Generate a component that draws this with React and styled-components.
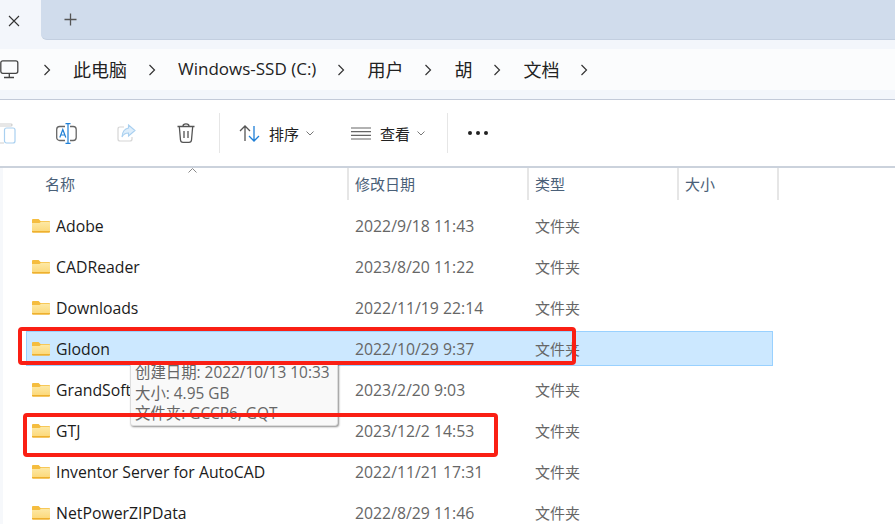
import React from 'react'
import styled, { createGlobalStyle } from 'styled-components'

const rows = [
  { name: 'Adobe', date: '2022/9/18 11:43' },
  { name: 'CADReader', date: '2023/8/20 11:22' },
  { name: 'Downloads', date: '2022/11/19 22:14' },
  { name: 'Glodon', date: '2022/10/29 9:37', selected: true },
  { name: 'GrandSoft', date: '2023/2/20 9:03' },
  { name: 'GTJ', date: '2023/12/2 14:53' },
  { name: 'Inventor Server for AutoCAD', date: '2022/11/21 17:31' },
  { name: 'NetPowerZIPData', date: '2022/8/29 11:46' },
]

const crumbs = [
  { label: '此电脑' },
  { label: 'Windows-SSD (C:)', latin: true },
  { label: '用户' },
  { label: '胡' },
  { label: '文档' },
]

const FolderIcon = () => (
  <svg width="18" height="15" viewBox="0 0 19 15" preserveAspectRatio="none">
    <defs>
      <linearGradient id="folderFace" x1="0" y1="0" x2="0" y2="1">
        <stop offset="0" stopColor="#fde9a6" />
        <stop offset="1" stopColor="#fcd878" />
      </linearGradient>
    </defs>
    <path d="M0 2 Q0 1 1 1 H7 L9 3 H18 Q19 3 19 4 V13.500 Q19 14.500 18 14.500 H1 Q0 14.500 0 13.500 Z" fill="#f5bd3f" />
    <path d="M0 5 H8 L9.500 3.800 H18 Q19 3.800 19 4.800 V13 Q19 14 18 14 H1 Q0 14 0 13 Z" fill="url(#folderFace)" />
    <path d="M0 13 H19 V13.500 Q19 14.500 18 14.500 H1 Q0 14.500 0 13.500 Z" fill="#eeb02e" />
  </svg>
)

const Chevron = () => (
  <svg width="8" height="12" viewBox="0 0 8 12">
    <path d="M1.500 1 L6.500 6 L1.500 11" fill="none" stroke="#333" strokeWidth="1.200" />
  </svg>
)

const Caret = () => (
  <svg width="8" height="5" viewBox="0 0 8 5">
    <path d="M0.500 0.500 L4 4 L7.500 0.500" fill="none" stroke="#777" strokeWidth="1" />
  </svg>
)

const App = () => {
  return (
    <Window>
      <GlobalStyle />
      <TabStrip>
        <Tab>
          <svg width="12" height="12" viewBox="0 0 12 12">
            <path d="M1 1 L11 11 M11 1 L1 11" stroke="#333" strokeWidth="1.100" />
          </svg>
        </Tab>
        <NewTabArea>
          <svg width="13" height="13" viewBox="0 0 13 13">
            <path d="M6.500 0.500 V12.500 M0.500 6.500 H12.500" stroke="#555" strokeWidth="1.300" />
          </svg>
        </NewTabArea>
      </TabStrip>

      <AddressArea>
        <AddressBar>
          <PcIcon width="19" height="20" viewBox="0 0 19 20">
            <rect x="0.800" y="0.800" width="17" height="12.500" rx="2" fill="none" stroke="#444" strokeWidth="1.300" />
            <path d="M9.300 13.500 V17 M4 17.500 H14" stroke="#444" strokeWidth="1.300" fill="none" />
          </PcIcon>
          {crumbs.map(c => (
            <React.Fragment key={c.label}>
              <ChevronBox><Chevron /></ChevronBox>
              <Crumb $latin={c.latin}>{c.label}</Crumb>
            </React.Fragment>
          ))}
          <ChevronBox><Chevron /></ChevronBox>
        </AddressBar>
      </AddressArea>

      <Toolbar>
        <ToolIcon $w={36} $start>
          <svg width="16" height="21" viewBox="0 0 16 21">
            <rect x="4.500" y="5" width="10.500" height="15" rx="2" fill="none" stroke="#a9d0f0" strokeWidth="1.200" />
            <path d="M0 3 H11 Q12 3 12 2 Q12 1 11 1 H0 M0 20 H4" stroke="#cfcfcf" strokeWidth="1.200" fill="none" />
          </svg>
        </ToolIcon>
        <ToolIcon $w={61}>
          <svg width="21" height="21" viewBox="0 0 21 21">
            <rect x="0.700" y="3.500" width="19.500" height="14" rx="3" fill="none" stroke="#666" strokeWidth="1.300" />
            <rect x="9" y="0" width="5" height="21" fill="#fff" />
            <path d="M12 0.500 V20.500 M9.500 0.700 H14.500 M9.500 20.300 H14.500" stroke="#1f7fd6" strokeWidth="1.200" fill="none" />
            <path d="M3.800 14.500 L6.800 6.500 L9.800 14.500 M5 12 H8.600" stroke="#1f7fd6" strokeWidth="1.200" fill="none" />
          </svg>
        </ToolIcon>
        <ToolIcon $w={59}>
          <svg width="19" height="19" viewBox="0 0 19 19">
            <path d="M7 3 H3 Q1 3 1 5 V15 Q1 17 3 17 H13 Q15 17 15 15 V13" fill="none" stroke="#d6d6d6" strokeWidth="1.200" />
            <path d="M11.500 1 L18 6.500 L11.500 12 V9 Q7 9 5 13 Q5.500 5 11.500 4 Z" fill="#deeefb" stroke="#a9d0f0" strokeWidth="1.100" />
          </svg>
        </ToolIcon>
        <ToolIcon $w={59}>
          <svg width="18" height="20" viewBox="0 0 18 20">
            <path d="M0.500 3.500 H17.500 M6 3 Q6 0.800 9 0.800 Q12 0.800 12 3 M2.300 3.500 L3.500 17 Q3.700 19.300 6 19.300 H12 Q14.300 19.300 14.500 17 L15.700 3.500 M7 8 V15 M11 8 V15" fill="none" stroke="#555" strokeWidth="1.300" />
          </svg>
        </ToolIcon>
        <Divider $gap={4} />
        <ToolButton $w={112}>
          <svg width="21" height="17" viewBox="0 0 21 17">
            <path d="M6 16 V1 M1 6 L6 1 L11 6" fill="none" stroke="#555" strokeWidth="1.300" />
            <path d="M15 1 V16 M10 11 L15 16 L20 11" fill="none" stroke="#1f7fd6" strokeWidth="1.300" />
          </svg>
          <ToolLabel>排序</ToolLabel>
          <Caret />
        </ToolButton>
        <ToolButton $w={115}>
          <svg width="20" height="13" viewBox="0 0 20 13">
            <path d="M0 1 H20 M0 4.700 H20 M0 8.300 H20 M0 12 H20" stroke="#666" strokeWidth="1.200" />
          </svg>
          <ToolLabel>查看</ToolLabel>
          <Caret />
        </ToolButton>
        <Divider />
        <More>
          <Dot /><Dot /><Dot />
        </More>
      </Toolbar>

      <ListPane>
        <Gutter />
        <List>
          <HeaderRow>
            <NameHead>
              名称
              <SortMark>
                <svg width="9" height="5" viewBox="0 0 9 5">
                  <path d="M0.500 4.500 L4.500 0.500 L8.500 4.500" fill="none" stroke="#888" strokeWidth="1" />
                </svg>
              </SortMark>
            </NameHead>
            <HeadCell $w={180}>修改日期</HeadCell>
            <HeadCell $w={150}>类型</HeadCell>
            <HeadCell $w={102}>大小</HeadCell>
          </HeaderRow>
          {rows.map(r => (
            <Row key={r.name}>
              <RowBox $selected={r.selected}>
                <NameCell>
                  <FolderIcon />
                  <span>{r.name}</span>
                </NameCell>
                <DateCell>{r.date}</DateCell>
                <TypeCell>文件夹</TypeCell>
              </RowBox>
            </Row>
          ))}
        </List>

        <Tooltip>
          <div>创建日期: 2022/10/13 10:33</div>
          <div>大小: 4.95 GB</div>
          <div>文件夹: GCCP6, GQT</div>
        </Tooltip>
        <RedBox $left={18} $top={159} $width={558} $height={38} />
        <RedBox $left={23} $top={245} $width={475} $height={44} />
      </ListPane>
    </Window>
  )
}

const GlobalStyle = createGlobalStyle`
  html, body {
    margin: 0;
    padding: 0;
    background: #fff;
    overflow: hidden;
  }
  * {
    box-sizing: border-box;
  }
`

const Window = styled.div`
  width: 895px;
  height: 524px;
  overflow: hidden;
  font-family: "Open Sans", "Noto Sans CJK SC", sans-serif;
  color: #1b1b1b;
  background: #fff;
`

const TabStrip = styled.div`
  height: 41px;
  display: flex;
  background: #f3f6fb;
`

const Tab = styled.div`
  width: 41px;
  height: 41px;
  background: #f3f6fb;
  border-top-right-radius: 8px;
  display: flex;
  align-items: center;
  padding-left: 8px;
  flex: none;
`

const NewTabArea = styled.div`
  flex: 1;
  height: 40px;
  display: flex;
  align-items: center;
  padding-left: 23px;
  background: #d0dcec;
  border-bottom: 1px solid #c3cfe0;
  border-bottom-left-radius: 6px;
`

const AddressArea = styled.div`
  height: 59px;
  padding-top: 8px;
  background: #f3f6fb;
  border-bottom: 1px solid #c3cad8;
`

const AddressBar = styled.div`
  height: 41px;
  display: flex;
  align-items: center;
  background: #fbfcfd;
  padding-bottom: 2px;
  font-size: 18px;
`

const PcIcon = styled.svg`
  margin-right: 3px;
  margin-top: 2px;
  flex: none;
`

const ChevronBox = styled.div`
  width: 8px;
  flex: none;
  display: flex;
  margin: 2px 22.500px 0 20.500px;
`

const Crumb = styled.span`
  color: #222;
  white-space: nowrap;
  font-size: ${p => (p.$latin ? '17px' : 'inherit')};
`

const Toolbar = styled.div`
  height: 68px;
  display: flex;
  align-items: center;
  border-bottom: 2px solid #cbd2dc;
  background: #fff;
`

const ToolIcon = styled.div`
  width: ${p => p.$w}px;
  display: flex;
  justify-content: ${p => (p.$start ? 'flex-start' : 'center')};
  flex: none;
`

const ToolButton = styled.div`
  width: ${p => p.$w}px;
  display: flex;
  align-items: center;
  padding-left: 19px;
  flex: none;
`

const ToolLabel = styled.span`
  font-size: 15px;
  margin: 0 7px 0 9px;
  color: #222;
`

const Divider = styled.div`
  width: 1px;
  height: 40px;
  margin-left: ${p => p.$gap || 0}px;
  background: #e6e6e6;
  flex: none;
`

const More = styled.div`
  display: flex;
  gap: 4px;
  margin-left: 20px;
`

const Dot = styled.span`
  width: 4px;
  height: 4px;
  border-radius: 50%;
  background: #222;
`

const ListPane = styled.div`
  position: relative;
  display: flex;
  height: 356px;
`

const Gutter = styled.div`
  width: 3px;
  background: #f6f8fb;
  flex: none;
`

const List = styled.div`
  flex: 1;
`

const HeaderRow = styled.div`
  height: 32px;
  display: flex;
  margin-bottom: 5px;
`

const HeadCell = styled.div`
  width: ${p => p.$w}px;
  border-left: 2px solid #e6e6e6;
  padding-left: 6px;
  font-size: 15px;
  line-height: 32px;
  color: #4a6078;
  flex: none;

  &:last-child {
    border-right: 2px solid #e6e6e6;
  }
`

const NameHead = styled.div`
  position: relative;
  width: 344px;
  padding-left: 42px;
  font-size: 15px;
  line-height: 32px;
  color: #4a6078;
  flex: none;
`

const SortMark = styled.span`
  position: absolute;
  left: 185px;
  top: -1px;
  line-height: 0;
`

const Row = styled.div`
  height: 41px;
  display: flex;
  align-items: center;
`

const RowBox = styled.div`
  width: 747px;
  margin-left: 23px;
  height: 35px;
  display: flex;
  align-items: center;
  padding-left: 5px;
  background: ${p => (p.$selected ? '#cce8ff' : 'transparent')};
  border: 1px solid ${p => (p.$selected ? '#99d1ff' : 'transparent')};
`

const NameCell = styled.div`
  width: 323px;
  display: flex;
  align-items: center;
  gap: 6px;
  font-size: 15.800px;
  color: #1b1b1b;
  flex: none;

  svg {
    flex: none;
  }
`

const DateCell = styled.div`
  width: 180px;
  font-size: 15.800px;
  color: #666;
  flex: none;
`

const TypeCell = styled.div`
  font-size: 15px;
  color: #666;
`

const Tooltip = styled.div`
  position: absolute;
  left: 130px;
  top: 194px;
  width: 208px;
  height: 64px;
  padding-left: 4px;
  background: #f9f9f9;
  border: 1px solid #dcdcdc;
  border-radius: 3px;
  box-shadow: 1px 1px 2px rgba(0, 0, 0, 0.45);
  font-size: 15.400px;
  line-height: 20.500px;
  color: #666;
  overflow: hidden;
  white-space: nowrap;
`

const RedBox = styled.div`
  position: absolute;
  left: ${p => p.$left}px;
  top: ${p => p.$top}px;
  width: ${p => p.$width}px;
  height: ${p => p.$height}px;
  border: 4px solid #fa1f14;
  border-radius: 4px;
`

export default App
